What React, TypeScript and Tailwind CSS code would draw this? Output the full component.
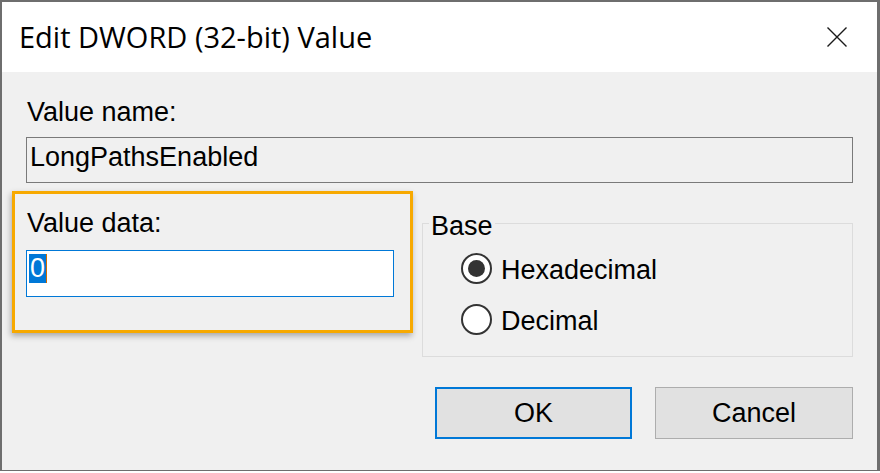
import React from "react";

function CloseIcon() {
  return (
    <svg width="20" height="20" viewBox="0 0 20 20" className="block">
      <path d="M0.5 0.5 L19.5 19.5 M19.5 0.5 L0.5 19.5" stroke="#1a1a1a" strokeWidth="1.4" fill="none" />
    </svg>
  );
}

function Radio({ checked, label }: { checked?: boolean; label: string }) {
  return (
    <div className="flex h-[41px] items-center">
      <span className="flex h-[31px] w-[31px] items-center justify-center rounded-full border-2 border-[#333333] bg-white">
        {checked && <span className="h-[17px] w-[17px] rounded-full bg-[#333333]" />}
      </span>
      <span className="ml-[9px] pt-[2px] text-[27px] leading-[30px]">{label}</span>
    </div>
  );
}

export default function App() {
  return (
    <div className="h-[473px] w-[880px] overflow-hidden bg-white font-['Liberation_Sans',Arial,sans-serif] text-black">
      <div className="flex h-[471px] w-[880px] flex-col border-b border-l-2 border-r-[3px] border-t-2 border-[#6e6e6e]">
        {/* title bar */}
        <div className="flex h-[70px] shrink-0 items-center justify-between bg-white pl-[17px] pr-[30px]">
          <span className="font-['Open_Sans',sans-serif] text-[29px] leading-[34px]">Edit DWORD (32-bit) Value</span>
          <CloseIcon />
        </div>

        {/* body */}
        <div className="flex flex-1 flex-col bg-[#f0f0f0] px-[24px] pt-[25px]">
          <div className="pl-[1px] text-[27px] leading-[30px]">Value name:</div>
          <div className="mt-[10px] h-[46px] border border-[#7a7a7a] bg-[#f0f0f0] pl-[3px] pt-[4px] text-[27px] leading-[30px]">
            LongPathsEnabled
          </div>

          <div className="flex">
            <div className="relative mt-[25px] w-[368px]">
              <div className="pl-[1px] text-[27px] leading-[30px]">Value data:</div>
              <div className="mt-[12px] flex h-[47px] items-start border border-[#0078d7] bg-white pl-[2px] pt-[3px]">
                <span className="bg-[#0078d7] px-[1px] text-[27px] leading-[29px] text-white">0</span>
                <span className="h-[29px] w-[1px] bg-[#d06a00]" />
              </div>
              <div className="pointer-events-none absolute -left-[14px] -top-[17px] h-[142px] w-[401px] border-[3px] border-[#f7a900] shadow-[-1px_3px_6px_rgba(0,0,0,0.3)]" />
            </div>

            <div className="relative ml-[28px] mt-[40px] h-[134px] flex-1 border border-[#dcdcdc] pl-[38px] pt-[24px]">
              <span className="absolute left-[6px] top-[-13px] bg-[#f0f0f0] px-[2px] text-[27px] leading-[30px]">Base</span>
              <div className="flex flex-col gap-[10px]">
                <Radio checked label="Hexadecimal" />
                <Radio label="Decimal" />
              </div>
            </div>
          </div>

          <div className="mt-[30px] flex justify-end gap-[23px]">
            <button className="flex h-[52px] w-[197px] items-center justify-center border-2 border-[#0078d7] bg-[#e1e1e1] text-[27px] leading-[30px]">
              OK
            </button>
            <button className="flex h-[52px] w-[198px] items-center justify-center border border-[#adadad] bg-[#e1e1e1] text-[27px] leading-[30px]">
              Cancel
            </button>
          </div>
        </div>
      </div>
    </div>
  );
}
